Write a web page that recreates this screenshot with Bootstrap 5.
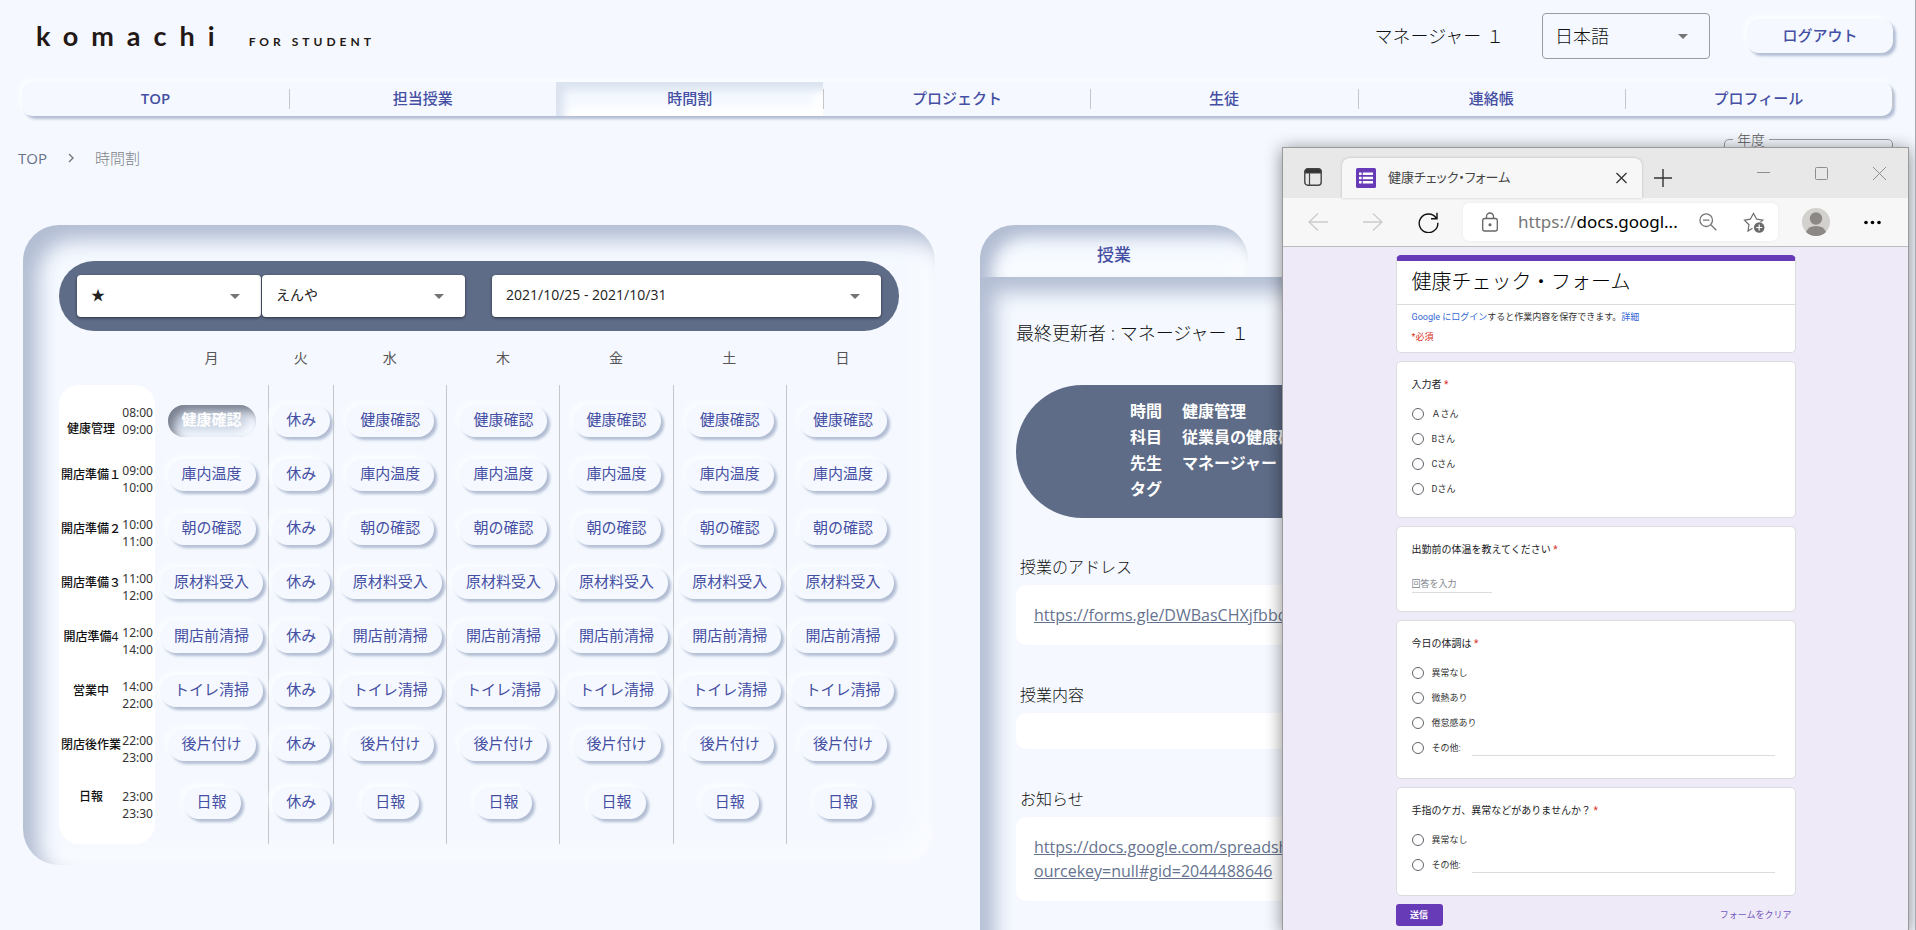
<!DOCTYPE html>
<html lang="ja">
<head>
<meta charset="utf-8">
<meta name="viewport" content="width=device-width, initial-scale=1">
<title>komachi FOR STUDENT</title>
<link rel="stylesheet" href="https://cdn.jsdelivr.net/npm/bootstrap@5.3.0/dist/css/bootstrap.min.css">
<style>
:root{--base:#f5f9ff;--shade:#b2bdd3;--slate:#5e6c87;--ink:#454fa3;--rule:#c6c6c8}
html,body{height:100%}
body{background:var(--base);color:#222;font-family:"Open Sans","Noto Sans CJK JP",sans-serif;font-size:16px}
button{font-family:inherit}
.page{position:relative;height:100vh;overflow:hidden;border-right:1px solid #a4a7ad}
.raised{background:var(--base);box-shadow:3px 3px 3px var(--shade),-3px -3px 4px #fafdff;border:0;color:var(--ink)}
.topbar{height:72px;padding:0 22px 0 36px}
.wordmark{color:#231815;font-family:Lato,sans-serif;font-weight:700;text-decoration:none}
.wordmark .brand-name{font-size:27px;line-height:36px;letter-spacing:13px}
.wordmark .brand-sub{margin-left:21px;font-size:12px;letter-spacing:4px}
.user{margin-right:38px;font-size:18px;font-weight:300;color:#111}
.pick{appearance:none;border:0;background:#fff url("data:image/svg+xml,%3Csvg xmlns='http://www.w3.org/2000/svg' width='24' height='24'%3E%3Cpath d='M7 10l5 5 5-5z' fill='%23757575'/%3E%3C/svg%3E") no-repeat right 14px center;color:#222}
.lang{width:168px;height:46px;padding:0 12px;border:1px solid #999da3;border-radius:4px;background-color:transparent;font-size:18px;font-weight:300;color:#111}
.logout{width:146px;height:34px;margin-left:37px;padding:0 0 2px;border-radius:12px;font-size:15px;font-weight:500}
.mainnav{margin:10px 23px 0 22px;border-radius:10px}
.mainnav a{height:34px;line-height:33px;color:var(--ink);font-size:15px;font-weight:500;text-align:center;text-decoration:none}
.mainnav a.latin{font-weight:600}
.mainnav .sep{width:1px;height:20px;background:var(--rule)}
.mainnav a.active{box-shadow:inset 8px 8px 8px #dbe3f0,inset -8px -8px 8px #fff}
.subbar{height:86px;margin-top:23px;padding:0 22px 0 18px}
.trail{gap:21px;margin-top:8px;font-size:15px;line-height:22px;font-weight:300;color:#808388}
.trail a{color:#66718a;font-weight:400;text-decoration:none}
.year{width:169px;height:54px;margin-top:-8px;border:1px solid #999da3;border-radius:5px;padding:0 8px}
.year legend{float:none;width:auto;margin:0;padding:0 4px;font-size:14px;line-height:17px;font-weight:300;color:#555}
.year select{width:100%;height:30px;background-color:transparent}
.boards{display:grid;grid-template-columns:1fr 1fr;gap:45px;padding:0 23px;align-items:start}
.sunken{box-shadow:inset 15px 15px 20px var(--shade),inset -15px -15px 20px #f9fbff}
.timeboard{border-radius:36px;padding:36px 36px 21px}
.filters{height:70px;border-radius:35px;background:var(--slate);padding:0 18px}
.filters .pick{height:42px;border-radius:4px;padding:0 14px 4px;font-size:14px;box-shadow:0 1px 3px #0008}
.f-star{width:184px}.f-name{width:203px;margin:0 27px 0 1px}
.grid-table{width:100%;table-layout:fixed;border-collapse:separate;border-spacing:0}
.grid-table col.c-time{width:96px}.grid-table col.c-tue{width:65px}
.grid-table thead th{height:54px;padding:0 0 2px;text-align:center;font-size:14px;font-weight:400;color:#555}
.grid-table td{height:54px;padding:0;text-align:center}
.grid-table td+td{border-left:1px solid var(--rule)}
.grid-table tbody th{height:54px;padding:0 2px;background:#fff;font-weight:400}
.grid-table tbody tr:first-child>*{height:63px;padding-top:9px}
.grid-table tbody tr:last-child>*{height:72px;padding-bottom:11px}
.grid-table tbody tr:first-child th{border-radius:20px 20px 0 0}
.grid-table tbody tr:last-child th{border-radius:0 0 20px 20px}
.slot{display:flex;align-items:center;justify-content:space-between}
.slot b{width:60px;margin-right:-2px;text-align:center;font-size:12px;font-weight:500;color:#111;white-space:nowrap;line-height:18px}
tr:first-child .slot b{margin-top:16px}
tr:last-child .slot b{margin-bottom:12px}
.slot time{display:block;font:12px/17px "Noto Sans",sans-serif;color:#333}
.slot .hours{margin-top:8px}
tr:first-child .slot .hours{margin-top:0}
tr:last-child .slot .hours{margin-top:4px}
.pill{height:32px;border-radius:16px;padding:0 14px 4px;font-size:15px;line-height:22px;white-space:nowrap}
.pill.on{color:#fff;font-weight:700;background:#cdd6e5;box-shadow:inset 6px 6px 8px #7b818f,inset -6px -6px 8px #f5f9ff}
.tabhead{width:268px;height:52px;border:0;border-radius:34px 34px 0 0;background:var(--base);color:var(--ink);font-size:17px;font-weight:500;padding:8px 0 0;display:block;box-shadow:inset 12px 12px 16px var(--shade),inset -12px -12px 16px #fafcff}
.lesson{padding:42px 36px;min-height:760px}
.updated{font-size:18px;line-height:28px;font-weight:300;margin:0 0 38px;color:#111}
.summary{background:var(--slate);color:#fff;border-radius:67px;height:133px;margin:0 0 33px;padding:13px 20px 0 114px;font-size:16px;font-weight:700;line-height:26px}
.summary dl{display:grid;grid-template-columns:52px 1fr;margin:0}
.summary dt,.summary dd{margin:0}
.lesson h2{font-size:16px;line-height:32px;font-weight:300;margin:0 0 2px 4px;color:#111}
.paper{background:#fff;border-radius:10px;padding:18px;min-height:36px;margin-bottom:34px;line-height:24px}
.paper a{color:#66738f}
.win{position:absolute;top:147px;right:6px;bottom:-2px;width:627px;border:1px solid #9a9a9a;background:#eeeaf8;box-shadow:0 2px 16px #0007;overflow:hidden}
.win button{border:0;background:none;padding:0;display:flex}
.titlebar{height:50px;background:#e8e8e8;padding-left:21px}
.titlebar .acts{margin-top:7px}
.titlebar .plus{margin:10px 0 0 12px}
.wtab{align-self:flex-end;width:300px;height:40px;gap:12px;margin-left:20px;padding:0 14px;background:#f7f7f7;border-radius:8px 8px 0 0;box-shadow:0 0 3px #0003;font-size:13px;color:#444;font-feature-settings:"palt"}
.caption-btns{margin:0 22px 0 auto;gap:45px}
.tools{height:49px;background:#f7f7f7;border-bottom:1px solid #bdbdbd;padding:0 27px 0 25px}
.tools .fwd{margin-left:35px}
.tools .reload{margin:0 24px 0 35px}
.tools .me{margin:0 34px 0 24px}
.addr{flex:1;height:38px;background:#fff;border-radius:6px;padding:0 13px 0 18px;box-shadow:0 0 3px #0001}
.url{margin-left:19px;font-family:"Noto Sans",sans-serif;font-size:17px;color:#000;white-space:nowrap}
.url span{color:#777}
.addr .fav{margin-left:26px}
.gform{width:400px;margin:8px auto 0;font-size:9px;color:#333;line-height:14px;font-family:Roboto,"Noto Sans CJK JP",sans-serif}
.sheet{background:#fff;border:1px solid #dadce0;border-radius:5px;margin-bottom:8px;padding:15px 15px 18px}
.sheet.first{border-top:6px solid #673ab7;padding:0 0 3px}
.sheet.who{padding-bottom:16px}
.sheet h1{font-size:20px;line-height:42px;height:44px;font-weight:300;margin:0;padding:0 15px;color:#000;border-bottom:1px solid #dadce0}
.intro{padding:5px 15px}
.intro p{margin:0 0 6px}
.intro a{color:#3367d6;text-decoration:none}
.req{color:#d93025}
.q{font-size:10px;line-height:16px;margin:0 0 8px;color:#202124}
.opt{display:flex;align-items:center;height:25px;gap:8px}
.opt input[type=radio]{appearance:none;width:12px;height:12px;margin:0;border:1px solid #5f6368;border-radius:50%;background:#fff;flex:none}
.line{border:0;border-bottom:1px solid #dadce0;background:none;padding:0;height:16px;font-size:9px;border-radius:0}
.line::placeholder{color:#80868b}
#temp{width:80px;height:18px;margin-top:17px}
.opt .line{flex:1;margin-left:3px;margin-right:5px}
.send{width:47px;height:22px;border-radius:3px;align-items:center;justify-content:center;font-size:9px;font-weight:700}
.gform button.send{background:#673ab7;color:#fff}
.clear{color:#7657bd;font-size:9px}
</style>
</head>
<body>
<div class="page">
  <header class="topbar d-flex align-items-center">
    <a href="#" class="wordmark d-flex align-items-baseline"><span class="brand-name">komachi</span><span class="brand-sub">FOR STUDENT</span></a>
    <span class="user ms-auto">マネージャー １</span>
    <select class="pick lang" aria-label="言語"><option>日本語</option></select>
    <button class="raised logout" type="button">ログアウト</button>
  </header>

  <nav class="mainnav raised d-flex align-items-center">
    <a class="flex-fill w-100 latin" href="#">TOP</a><span class="sep"></span>
    <a class="flex-fill w-100" href="#">担当授業</a><span class="sep"></span>
    <a class="flex-fill w-100 active" href="#" aria-current="page">時間割</a><span class="sep"></span>
    <a class="flex-fill w-100" href="#">プロジェクト</a><span class="sep"></span>
    <a class="flex-fill w-100" href="#">生徒</a><span class="sep"></span>
    <a class="flex-fill w-100" href="#">連絡帳</a><span class="sep"></span>
    <a class="flex-fill w-100" href="#">プロフィール</a><span class="sep"></span>
  </nav>

  <div class="subbar d-flex justify-content-between align-items-start">
    <div class="trail d-flex align-items-center">
      <a href="#">TOP</a>
      <svg width="6" height="10" viewBox="0 0 6 10" fill="none" stroke="#777" stroke-width="1.4"><path d="M1 1l4 4-4 4"/></svg>
      <span>時間割</span>
    </div>
    <fieldset class="year"><legend>年度</legend><select class="pick" aria-label="年度"><option>2021</option></select></fieldset>
  </div>

  <main class="boards">
    <section class="timeboard sunken">
      <div class="filters d-flex align-items-center">
        <select class="pick f-star" aria-label="区分"><option>★</option></select>
        <select class="pick f-name" aria-label="店舗"><option>えんや</option></select>
        <select class="pick flex-fill" aria-label="期間"><option>2021/10/25 - 2021/10/31</option></select>
      </div>
      <table class="grid-table">
        <colgroup><col class="c-time"><col><col class="c-tue"><col><col><col><col><col></colgroup>
        <thead><tr><th></th><th>月</th><th>火</th><th>水</th><th>木</th><th>金</th><th>土</th><th>日</th></tr></thead>
        <tbody>
        <tr><th scope="row"><div class="slot"><b>健康管理</b><div class="hours"><time>08:00</time><time>09:00</time></div></div></th><td><button class="raised pill on">健康確認</button></td><td><button class="raised pill">休み</button></td><td><button class="raised pill">健康確認</button></td><td><button class="raised pill">健康確認</button></td><td><button class="raised pill">健康確認</button></td><td><button class="raised pill">健康確認</button></td><td><button class="raised pill">健康確認</button></td></tr>
        <tr><th scope="row"><div class="slot"><b>開店準備１</b><div class="hours"><time>09:00</time><time>10:00</time></div></div></th><td><button class="raised pill">庫内温度</button></td><td><button class="raised pill">休み</button></td><td><button class="raised pill">庫内温度</button></td><td><button class="raised pill">庫内温度</button></td><td><button class="raised pill">庫内温度</button></td><td><button class="raised pill">庫内温度</button></td><td><button class="raised pill">庫内温度</button></td></tr>
        <tr><th scope="row"><div class="slot"><b>開店準備２</b><div class="hours"><time>10:00</time><time>11:00</time></div></div></th><td><button class="raised pill">朝の確認</button></td><td><button class="raised pill">休み</button></td><td><button class="raised pill">朝の確認</button></td><td><button class="raised pill">朝の確認</button></td><td><button class="raised pill">朝の確認</button></td><td><button class="raised pill">朝の確認</button></td><td><button class="raised pill">朝の確認</button></td></tr>
        <tr><th scope="row"><div class="slot"><b>開店準備３</b><div class="hours"><time>11:00</time><time>12:00</time></div></div></th><td><button class="raised pill">原材料受入</button></td><td><button class="raised pill">休み</button></td><td><button class="raised pill">原材料受入</button></td><td><button class="raised pill">原材料受入</button></td><td><button class="raised pill">原材料受入</button></td><td><button class="raised pill">原材料受入</button></td><td><button class="raised pill">原材料受入</button></td></tr>
        <tr><th scope="row"><div class="slot"><b>開店準備4</b><div class="hours"><time>12:00</time><time>14:00</time></div></div></th><td><button class="raised pill">開店前清掃</button></td><td><button class="raised pill">休み</button></td><td><button class="raised pill">開店前清掃</button></td><td><button class="raised pill">開店前清掃</button></td><td><button class="raised pill">開店前清掃</button></td><td><button class="raised pill">開店前清掃</button></td><td><button class="raised pill">開店前清掃</button></td></tr>
        <tr><th scope="row"><div class="slot"><b>営業中</b><div class="hours"><time>14:00</time><time>22:00</time></div></div></th><td><button class="raised pill">トイレ清掃</button></td><td><button class="raised pill">休み</button></td><td><button class="raised pill">トイレ清掃</button></td><td><button class="raised pill">トイレ清掃</button></td><td><button class="raised pill">トイレ清掃</button></td><td><button class="raised pill">トイレ清掃</button></td><td><button class="raised pill">トイレ清掃</button></td></tr>
        <tr><th scope="row"><div class="slot"><b>閉店後作業</b><div class="hours"><time>22:00</time><time>23:00</time></div></div></th><td><button class="raised pill">後片付け</button></td><td><button class="raised pill">休み</button></td><td><button class="raised pill">後片付け</button></td><td><button class="raised pill">後片付け</button></td><td><button class="raised pill">後片付け</button></td><td><button class="raised pill">後片付け</button></td><td><button class="raised pill">後片付け</button></td></tr>
        <tr><th scope="row"><div class="slot"><b>日報</b><div class="hours"><time>23:00</time><time>23:30</time></div></div></th><td><button class="raised pill">日報</button></td><td><button class="raised pill">休み</button></td><td><button class="raised pill">日報</button></td><td><button class="raised pill">日報</button></td><td><button class="raised pill">日報</button></td><td><button class="raised pill">日報</button></td><td><button class="raised pill">日報</button></td></tr>
        </tbody>
      </table>
    </section>

    <section>
      <button class="tabhead" type="button">授業</button>
      <div class="lesson sunken">
        <p class="updated">最終更新者 : マネージャー １</p>
        <div class="summary"><dl><dt>時間</dt><dd>健康管理</dd><dt>科目</dt><dd>従業員の健康確認</dd><dt>先生</dt><dd>マネージャー １</dd><dt>タグ</dt><dd></dd></dl></div>
        <h2>授業のアドレス</h2>
        <div class="paper"><a href="#">https://forms.gle/DWBasCHXjfbbd</a></div>
        <h2>授業内容</h2>
        <div class="paper"></div>
        <h2>お知らせ</h2>
        <div class="paper"><a href="#">https://docs.google.com/spreadsheets/<br>ourcekey=null#gid=2044488646</a></div>
      </div>
    </section>
  </main>

  <aside class="win" aria-label="健康チェック・フォーム">
    <div class="titlebar d-flex align-items-center">
      <button class="acts" aria-label="タブ操作"><svg width="18" height="18" viewBox="0 0 18 18" fill="none" stroke="#444"><rect x=".8" y=".8" width="16.4" height="16.4" rx="3" stroke-width="1.4"/><path d="M1 4V3q0-2 2-2h12q2 0 2 2v2H1z" fill="#333"/><path d="M5.5 5v12" stroke-width="1.2"/></svg></button>
      <div class="wtab d-flex align-items-center">
        <svg width="20" height="20" viewBox="0 0 20 20"><rect width="20" height="20" rx="1.5" fill="#673ab7"/><path fill="#fff" d="M3 4.500h2.600v2.600H3zm3.800 0H17v2.600H6.800zM3 8.700h2.600v2.600H3zm3.800 0H17v2.600H6.800zM3 12.900h2.600v2.600H3zm3.800 0H17v2.600H6.800z"/></svg>
        <span>健康チェック・フォーム</span>
        <button class="ms-auto" aria-label="タブを閉じる"><svg width="13" height="12" viewBox="0 0 12 12" stroke="#333" stroke-width="1.3"><path d="M1 1l10 10M11 1L1 11"/></svg></button>
      </div>
      <button class="plus" aria-label="新しいタブ"><svg width="18" height="18" viewBox="0 0 18 18" stroke="#333" stroke-width="1.4"><path d="M9 0v18M0 9h18"/></svg></button>
      <div class="caption-btns d-flex align-items-center">
        <button aria-label="最小化"><svg width="13" height="13" viewBox="0 0 13 13" stroke="#8f8f8f"><path d="M0 5.500h13"/></svg></button>
        <button aria-label="最大化"><svg width="13" height="13" viewBox="0 0 13 13" fill="none" stroke="#8f8f8f"><rect x=".5" y=".5" width="12" height="12" rx="1"/></svg></button>
        <button aria-label="閉じる"><svg width="13" height="13" viewBox="0 0 13 13" stroke="#8f8f8f"><path d="M0 0l13 13M13 0L0 13"/></svg></button>
      </div>
    </div>
    <div class="tools d-flex align-items-center">
      <button aria-label="戻る"><svg width="20" height="18" viewBox="0 0 20 18" fill="none" stroke="#cbcbcb" stroke-width="1.300"><path d="M10 .5L1 9l9 8.500M1 9h19"/></svg></button>
      <button class="fwd" aria-label="進む"><svg width="20" height="18" viewBox="0 0 20 18" fill="none" stroke="#cbcbcb" stroke-width="1.300"><path d="M10 .5L19 9l-9 8.500M19 9H0"/></svg></button>
      <button class="reload" aria-label="更新"><svg width="21" height="21" viewBox="0 0 21 21" fill="none" stroke="#111" stroke-width="1.400"><path d="M18.300 6.200A9.300 9.300 0 1 0 19.800 10.700M19 .8v6h-6"/></svg></button>
      <div class="addr d-flex align-items-center">
        <svg width="18" height="20" viewBox="0 0 18 20" fill="none" stroke="#666" stroke-width="1.300"><rect x="1.700" y="6.500" width="14.600" height="12.500" rx="2"/><path d="M5.500 6.500V4.500a3.500 3.500 0 0 1 7 0v2"/><circle cx="9" cy="12.700" r=".9" fill="#666"/></svg>
        <span class="url"><span>https://</span>docs.googl...</span>
        <button class="ms-auto" aria-label="縮小"><svg width="18" height="18" viewBox="0 0 18 18" fill="none" stroke="#757575" stroke-width="1.300"><circle cx="7.200" cy="7.200" r="6.300"/><path d="M4 7.200h6.400M11.800 11.800l5.500 5.500"/></svg></button>
        <button class="fav" aria-label="お気に入り"><svg width="22" height="21" viewBox="0 0 22 21" fill="none" stroke="#6b6b6b" stroke-width="1.200"><path d="M9.500 16.200L5 19l1-6.200L1.500 8.200l5.700-1L10.500 1.500l3.200 5.700 6.100.9-2.300 2"/><circle cx="16.200" cy="15.500" r="5.300" fill="#6b6b6b" stroke="none"/><path d="M16.200 12.500v6M13.200 15.500h6" stroke="#fff"/></svg></button>
      </div>
      <button class="me" aria-label="プロフィール"><svg width="28" height="28" viewBox="0 0 28 28"><circle cx="14" cy="14" r="14" fill="#d3d1ce"/><circle cx="14" cy="10.500" r="6.200" fill="#8c8885"/><path d="M4 24q2-6 10-6t10 6q-4 4-10 4T4 24z" fill="#8c8885"/></svg></button>
      <button aria-label="設定など"><svg width="17" height="5" viewBox="0 0 17 5"><circle cx="2" cy="2.500" r="1.800"/><circle cx="8.500" cy="2.500" r="1.800"/><circle cx="15" cy="2.500" r="1.800"/></svg></button>
    </div>
    <form class="gform" onsubmit="return false">
      <div class="sheet first">
        <h1>健康チェック・フォーム</h1>
        <div class="intro"><p><a href="#">Google にログイン</a>すると作業内容を保存できます。<a href="#">詳細</a></p><p class="req mb-0">*必須</p></div>
      </div>
      <div class="sheet who">
        <p class="q">入力者 <span class="req">*</span></p>
        <label class="opt"><input type="radio" name="who">Ａさん</label>
        <label class="opt"><input type="radio" name="who">Bさん</label>
        <label class="opt"><input type="radio" name="who">Cさん</label>
        <label class="opt"><input type="radio" name="who">Dさん</label>
      </div>
      <div class="sheet">
        <label class="q d-block m-0" for="temp">出勤前の体温を教えてください <span class="req">*</span></label>
        <input id="temp" class="line d-block" placeholder="回答を入力">
      </div>
      <div class="sheet">
        <p class="q">今日の体調は <span class="req">*</span></p>
        <label class="opt"><input type="radio" name="cond">異常なし</label>
        <label class="opt"><input type="radio" name="cond">微熱あり</label>
        <label class="opt"><input type="radio" name="cond">倦怠感あり</label>
        <div class="opt"><input type="radio" name="cond" id="co"><label for="co">その他:</label><input class="line" aria-label="その他の回答"></div>
      </div>
      <div class="sheet">
        <p class="q">手指のケガ、異常などがありませんか？ <span class="req">*</span></p>
        <label class="opt"><input type="radio" name="hand">異常なし</label>
        <div class="opt"><input type="radio" name="hand" id="ho"><label for="ho">その他:</label><input class="line" aria-label="その他の回答"></div>
      </div>
      <div class="d-flex align-items-center justify-content-between pe-1"><button class="send" type="submit">送信</button><button class="clear" type="reset">フォームをクリア</button></div>
    </form>
  </aside>
</div>
<script src="https://cdn.jsdelivr.net/npm/bootstrap@5.3.0/dist/js/bootstrap.bundle.min.js"></script>
</body>
</html>
